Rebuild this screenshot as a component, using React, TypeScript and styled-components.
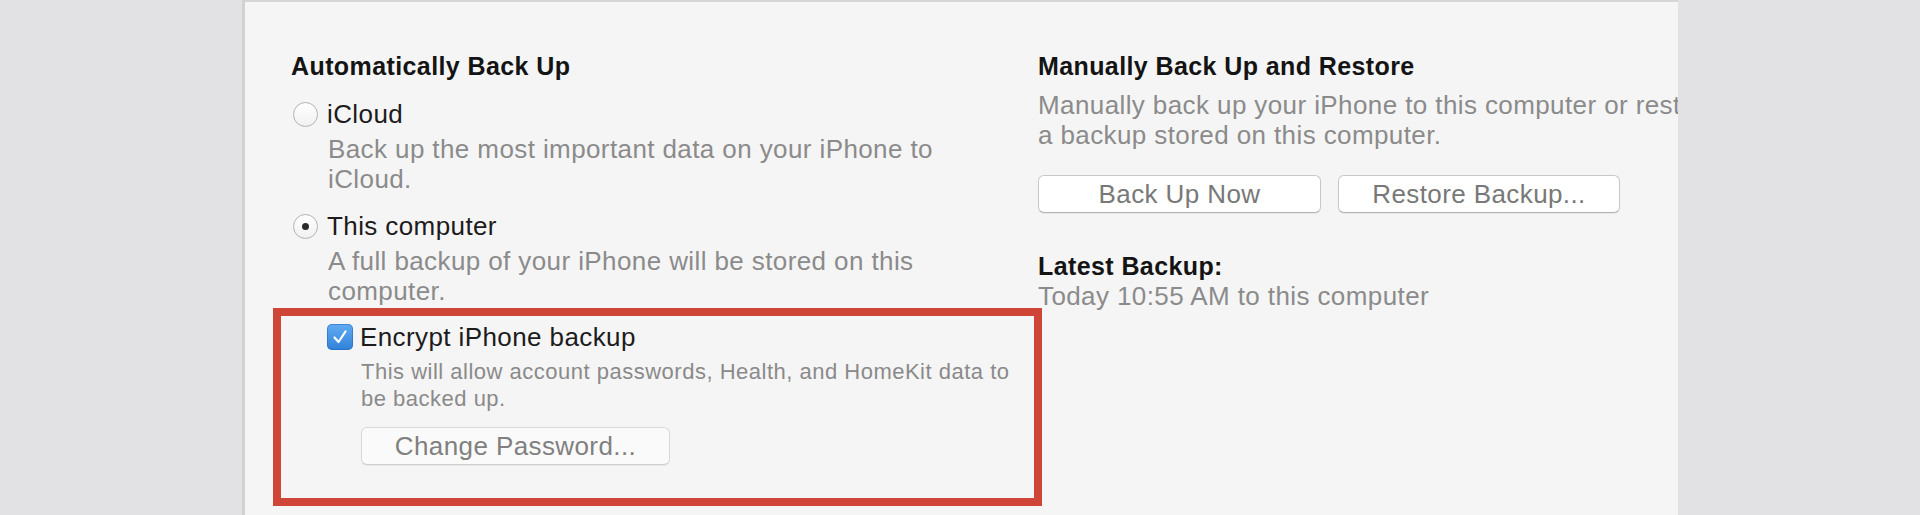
import React from 'react';
import styled, { createGlobalStyle } from 'styled-components';

const GlobalStyle = createGlobalStyle`
  html, body {
    margin: 0;
    padding: 0;
    background: #e2e2e4;
  }

  body {
    font-family: "Liberation Sans", Arial, sans-serif;
  }
`;

const Page = styled.div`
  display: flex;
  height: 515px;
  padding-left: 242px;
  background: #e2e2e4;
  overflow: hidden;
`;

const Panel = styled.div`
  display: grid;
  grid-template-columns: 747px 1fr;
  align-items: start;
  width: 1436px;
  height: 515px;
  box-sizing: border-box;
  padding: 49px 0 0 46px;
  overflow: hidden;

  background: #f5f5f5;
  border-left: 3px solid #d2d2d2;
  border-top: 2px solid #d6d6d6;
`;

const Column = styled.div`
  display: flex;
  flex-direction: column;
  align-items: flex-start;
  min-width: 0;
`;

const Heading = styled.h2`
  margin: 0;
  font-weight: 700;
  font-size: 25px;
  line-height: 30px;
  letter-spacing: 0.4px;
  color: #141414;
`;

const OptionRow = styled.label<{ $gap?: number }>`
  display: flex;
  align-items: center;
  gap: ${({ $gap }) => $gap ?? 9}px;
  height: 30px;
  margin-top: ${({ $gap }) => ($gap ? 0 : 18)}px;
  font-size: 26px;
  letter-spacing: 0.4px;
  color: #1c1c1c;
`;

const Radio = styled.span<{ $checked?: boolean }>`
  display: flex;
  align-items: center;
  justify-content: center;
  width: 25px;
  height: 25px;
  margin-left: 2px;
  box-sizing: border-box;
  border-radius: 50%;
  border: 1.5px solid #b3b3b3;
  background: linear-gradient(#ffffff, #f1f1f1);

  &::after {
    content: '';
    display: ${({ $checked }) => ($checked ? 'block' : 'none')};
    width: 7px;
    height: 7px;
    border-radius: 50%;
    background: #2a2a2a;
  }
`;

const Description = styled.p<{ $top?: number }>`
  margin: ${({ $top }) => $top ?? 5}px 0 0 37px;
  font-size: 26px;
  line-height: 30px;
  letter-spacing: 0.4px;
  color: #8b8b8b;
`;

const Highlight = styled.div`
  width: 769px;
  box-sizing: border-box;
  margin: 2px 0 0 -18px;
  padding: 6px 0 33px 46px;
  border: 8px solid #cf4538;
`;

const Checkbox = styled.span`
  display: flex;
  align-items: center;
  justify-content: center;
  width: 26px;
  height: 26px;
  border-radius: 5px;
  background: linear-gradient(#63acf2, #2f82da);
  box-shadow: inset 0 0 0 1px rgba(30, 100, 180, 0.5);
`;

const Indented = styled.div`
  display: flex;
  flex-direction: column;
  align-items: flex-start;
  padding-left: 34px;
`;

const SmallText = styled.p`
  margin: 6px 0 0;
  font-size: 22px;
  line-height: 27px;
  letter-spacing: 0.5px;
  color: #8a8a8a;
`;

const Button = styled.button<{ $width: number; $muted?: boolean }>`
  width: ${({ $width }) => $width}px;
  height: 38px;
  padding: 0;
  font-family: inherit;
  font-size: 26px;
  letter-spacing: 0.4px;
  color: ${({ $muted }) => ($muted ? '#808080' : '#787878')};
  background: ${({ $muted }) => ($muted ? '#fafafa' : '#ffffff')};
  border: 1px solid ${({ $muted }) => ($muted ? '#d9d9d9' : '#c8c8c8')};
  border-bottom-color: ${({ $muted }) => ($muted ? '#cfcfcf' : '#b3b3b3')};
  border-radius: 6px;
  box-shadow: 0 1px 1px rgba(0, 0, 0, 0.06);
`;

const PasswordButton = styled(Button)`
  margin-top: 15px;
`;

const ButtonRow = styled.div`
  display: flex;
  gap: 17px;
  margin-top: 25px;
`;

const RightText = styled.p<{ $top?: number }>`
  margin: ${({ $top }) => $top ?? 0}px 0 0;
  font-size: 26px;
  line-height: 30px;
  letter-spacing: 0.4px;
  white-space: nowrap;
  color: #8b8b8b;
`;

const SubHeading = styled(Heading)`
  margin-top: 38px;
`;

const Check = () => (
  <svg width="18" height="18" viewBox="0 0 18 18">
    <path d="M3.5 9.5 L7.5 14 L14.5 3.5" fill="none" stroke="#fff" strokeWidth="2.2" strokeLinecap="round" strokeLinejoin="round" />
  </svg>
);

const App: React.FC = () => {
  return (
    <>
      <GlobalStyle />
      <Page>
        <Panel>
          <Column>
            <Heading>Automatically Back Up</Heading>

            <OptionRow>
              <Radio />
              iCloud
            </OptionRow>
            <Description>
              Back up the most important data on your iPhone to
              <br />
              iCloud.
            </Description>

            <OptionRow style={{ marginTop: 17 }}>
              <Radio $checked />
              This computer
            </OptionRow>
            <Description>
              A full backup of your iPhone will be stored on this
              <br />
              computer.
            </Description>

            <Highlight>
              <OptionRow $gap={7}>
                <Checkbox>
                  <Check />
                </Checkbox>
                Encrypt iPhone backup
              </OptionRow>
              <Indented>
                <SmallText>
                  This will allow account passwords, Health, and HomeKit data to
                  <br />
                  be backed up.
                </SmallText>
                <PasswordButton $width={309} $muted>Change Password...</PasswordButton>
              </Indented>
            </Highlight>
          </Column>

          <Column>
            <Heading>Manually Back Up and Restore</Heading>
            <RightText $top={9}>
              Manually back up your iPhone to this computer or restore
              <br />
              a backup stored on this computer.
            </RightText>

            <ButtonRow>
              <Button $width={283}>Back Up Now</Button>
              <Button $width={282}>Restore Backup...</Button>
            </ButtonRow>

            <SubHeading>Latest Backup:</SubHeading>
            <RightText>Today 10:55 AM to this computer</RightText>
          </Column>
        </Panel>
      </Page>
    </>
  );
};

export default App;
